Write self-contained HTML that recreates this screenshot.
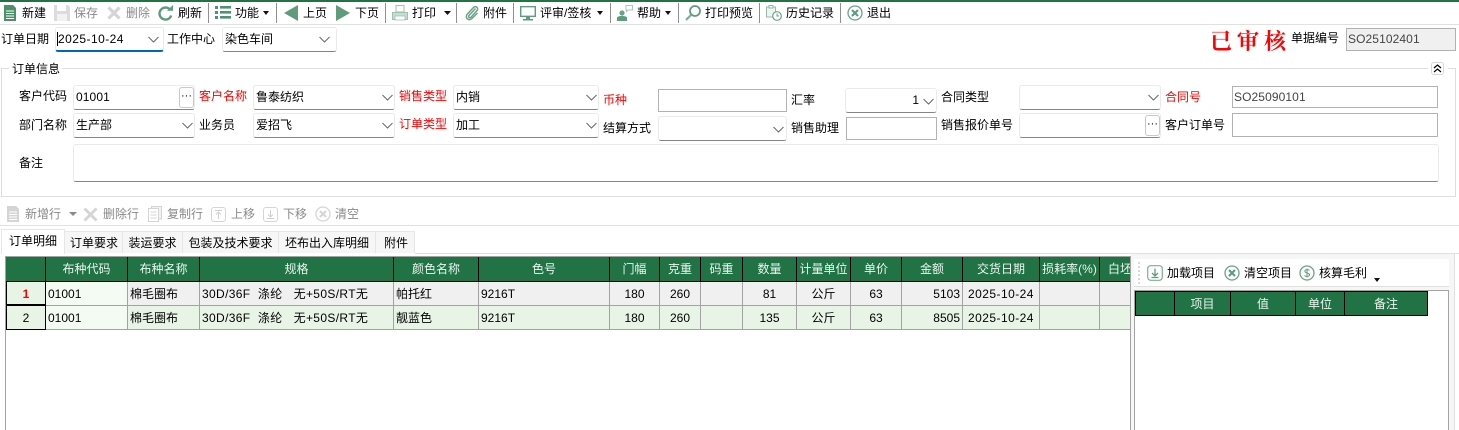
<!DOCTYPE html>
<html lang="zh"><head><meta charset="utf-8"><title>订单</title>
<style>
html,body{margin:0;padding:0;background:#fff}
#p{position:relative;width:1459px;height:430px;overflow:hidden;background:#fff;font:12px/16px "Liberation Sans","Noto Sans CJK SC",sans-serif;color:#000}
#p *{box-sizing:border-box}
.t{position:absolute;white-space:pre;line-height:16px}
.r{color:#f00}
.g{color:#8a8a8a}
.sep{position:absolute;top:3px;width:1px;height:20px;background:#8f8f8f}
.ln{position:absolute;background:#e0e0e0}
.c{position:absolute;background:#fff;border:1px solid #eaeaea;border-bottom:1.5px solid #858585;border-radius:3px;height:25px;padding:3px 2px;line-height:16px}
.c svg.ch{position:absolute;right:3px;top:8px}
.i{position:absolute;background:#fff;border:1px solid #b2b2b2;padding:2px 1px;line-height:16px;color:#444}
.b{position:absolute;width:15px;height:21px;border:1px solid #c9c9c9;border-radius:3px;background:#fff;text-align:center;line-height:16px;font-size:11px}
svg{position:absolute;display:block}
.row{position:absolute;left:0;display:flex;height:24px}
.row div{flex:none;border-right:1px solid #a3a3a3;border-bottom:1px solid #a3a3a3;text-align:center;line-height:24px;white-space:pre;overflow:hidden}
.h div{background:#217346;color:#e9f6ee;border-right:1px solid #000;border-bottom:1px solid #000;line-height:24px}
.row div.l{text-align:left;padding-left:2px}
.row div.s{letter-spacing:.35px}
.row div.rt{text-align:right;padding-right:2px}
.row div.d{letter-spacing:.45px}
.row div.n{background:#e8f5e6;border:1px solid #000;border-top:0;text-align:center}
.tab{position:absolute;top:231px;height:22px;background:#f6f6f6;border:1px solid #e6e6e6;border-bottom:0;text-align:center;line-height:23px}
</style></head><body><div id="p">

<div style="position:absolute;left:0;top:0;width:1459px;height:2px;background:#217346"></div>
<div class="ln" style="left:0;top:24px;width:1459px;height:1px"></div>

<svg style="left:4px;top:5px" width="12" height="16" viewBox="0 0 12 16"><path d="M0 0H9L12 3V16H0Z" fill="#4a9068"/><path d="M2 6H10M2 8.5H10M2 11H10M2 13.5H10" stroke="#fff" stroke-width="1"/></svg>
<span class="t" style="left:22px;top:5px">新建</span>
<svg style="left:54px;top:5px" width="16" height="16" viewBox="0 0 16 16"><path d="M0 0H14L16 2V16H0Z" fill="#dcdcdc"/><path d="M3 0H12V6H3Z" fill="#fff"/><path d="M3 9H13V16H3Z" fill="#f2f2f2"/></svg>
<span class="t g" style="left:74px;top:5px">保存</span>
<svg style="left:107px;top:6px" width="14" height="14" viewBox="0 0 14 14"><path d="M1.5 1.5L12.5 12.5M12.5 1.5L1.5 12.5" stroke="#d5d5d5" stroke-width="3.2"/></svg>
<span class="t g" style="left:126px;top:5px">删除</span>
<svg style="left:158px;top:5px" width="15" height="16" viewBox="0 0 15 16"><path d="M12.5 5.2A6 6 0 1 0 13.2 10.5" fill="none" stroke="#5f9c7c" stroke-width="2.4"/><path d="M9 5.8H15V0Z" fill="#5f9c7c"/></svg>
<span class="t" style="left:178px;top:5px">刷新</span>
<div class="sep" style="left:208px"></div>
<svg style="left:215px;top:6px" width="16" height="13" viewBox="0 0 16 13"><path d="M0 0H3V3H0ZM0 5H3V8H0ZM0 10H3V13H0Z" fill="#4f9270"/><path d="M5 0H16V2.6H5ZM5 5H16V7.6H5ZM5 10H16V12.6H5Z" fill="#4f9270"/></svg>
<span class="t" style="left:235px;top:5px">功能</span>
<svg style="left:263px;top:11px" width="6" height="4" viewBox="0 0 6 4"><path d="M0 0H6L3 4Z" fill="#111"/></svg>
<div class="sep" style="left:276px"></div>
<svg style="left:284px;top:5px" width="14" height="16" viewBox="0 0 14 16"><path d="M14 0V16L0 8Z" fill="#5f9c7c"/></svg>
<span class="t" style="left:303px;top:5px">上页</span>
<svg style="left:336px;top:5px" width="14" height="16" viewBox="0 0 14 16"><path d="M0 0V16L14 8Z" fill="#5f9c7c"/></svg>
<span class="t" style="left:355px;top:5px">下页</span>
<div class="sep" style="left:385px"></div>
<svg style="left:392px;top:5px" width="16" height="16" viewBox="0 0 16 16"><path d="M4 .5H12V7H4Z" fill="#fff" stroke="#9cc1ad"/><path d="M.5 7.5H15.5V14.5H.5Z" fill="#c6dccf" stroke="#9cc1ad"/><path d="M3 11H13V15H3Z" fill="#fff" stroke="#9cc1ad" stroke-width=".8"/></svg>
<span class="t" style="left:412px;top:5px">打印</span>
<svg style="left:444px;top:11px" width="7" height="4" viewBox="0 0 7 4"><path d="M0 0H7L3.5 4Z" fill="#111"/></svg>
<div class="sep" style="left:456px"></div>
<svg style="left:465px;top:5px" width="14" height="16" viewBox="0 0 14 16"><path d="M10.5 3.5L4 10.5C2.800 12 4.500 13.500 6 12.200L12 5.500C14 3 10.800 .2 8.500 2.500L2.200 9.200C-.5 12.500 3.500 16.800 7 13.500L12.500 8" fill="none" stroke="#6aa385" stroke-width="1.500"/></svg>
<span class="t" style="left:483px;top:5px">附件</span>
<div class="sep" style="left:513px"></div>
<svg style="left:520px;top:6px" width="16" height="15" viewBox="0 0 16 15"><path d="M.7 .7H15.300V10.300H.7Z" fill="#fff" stroke="#5f9c7c" stroke-width="1.400"/><path d="M6 11H10V13H13V14.500H3V13H6Z" fill="#5f9c7c"/></svg>
<span class="t" style="left:540px;top:5px">评审/签核</span>
<svg style="left:597px;top:11px" width="6" height="4" viewBox="0 0 6 4"><path d="M0 0H6L3 4Z" fill="#111"/></svg>
<div class="sep" style="left:610px"></div>
<svg style="left:617px;top:5px" width="16" height="16" viewBox="0 0 16 16"><circle cx="5" cy="8" r="2.600" fill="#6aa385"/><path d="M0 16V13C0 11.500 2 11 5 11S10 11.500 10 13V16Z" fill="#5f9c7c"/><path d="M9 .5H15.500V5H11L9.500 6.500V5H9Z" fill="#fff" stroke="#a9c9b7"/></svg>
<span class="t" style="left:637px;top:5px">帮助</span>
<svg style="left:665px;top:11px" width="6" height="4" viewBox="0 0 6 4"><path d="M0 0H6L3 4Z" fill="#111"/></svg>
<div class="sep" style="left:678px"></div>
<svg style="left:685px;top:5px" width="16" height="16" viewBox="0 0 16 16"><circle cx="10" cy="6" r="5" fill="none" stroke="#5f9c7c" stroke-width="1.800"/><path d="M6 10L1 15" stroke="#7cae93" stroke-width="2.200"/></svg>
<span class="t" style="left:705px;top:5px">打印预览</span>
<div class="sep" style="left:759px"></div>
<svg style="left:766px;top:5px" width="16" height="16" viewBox="0 0 16 16"><path d="M.5 2H9.500V12H.5Z" fill="#eef5f0" stroke="#93bba5"/><path d="M3 .5H7V3H3Z" fill="#fff" stroke="#93bba5"/><circle cx="11" cy="11" r="4.300" fill="#fff" stroke="#6aa385" stroke-width="1.200"/><path d="M11 8.500V11H13" fill="none" stroke="#6aa385"/></svg>
<span class="t" style="left:786px;top:5px">历史记录</span>
<div class="sep" style="left:840px"></div>
<svg style="left:847px;top:5px" width="16" height="16" viewBox="0 0 16 16"><circle cx="8" cy="8" r="7" fill="none" stroke="#6aa385" stroke-width="1.300"/><path d="M5 5L11 11M11 5L5 11" stroke="#5f9c7c" stroke-width="2.200"/></svg>
<span class="t" style="left:867px;top:5px">退出</span>

<span class="t" style="left:1px;top:31px">订单日期</span>
<div class="c" style="left:55px;top:27px;width:109px;border-color:#eaeaea;border-bottom:2px solid #0067c0;letter-spacing:.45px"><span style="border-left:1px solid #000;margin-left:-1px">2025-10-24</span><svg class="ch" style="right:4px" width="11" height="7" viewBox="0 0 11 7"><path d="M.5 1L5.500 6L10.500 1" fill="none" stroke="#666"/></svg></div>
<span class="t" style="left:167px;top:31px">工作中心</span>
<div class="c" style="left:222px;top:27px;width:115px">染色车间<svg class="ch" style="right:6px" width="11" height="7" viewBox="0 0 11 7"><path d="M.5 1L5.500 6L10.500 1" fill="none" stroke="#666"/></svg></div>
<span class="t r" style="left:1210px;top:26px;font:700 22px/30px 'Noto Serif CJK SC',serif;letter-spacing:5px">已审核</span>
<span class="t" style="left:1291px;top:30px">单据编号</span>
<div class="i" style="left:1346px;top:28px;width:110px;height:23px;background:#f0f0f0;letter-spacing:.1px">SO25102401</div>

<div style="position:absolute;left:1px;top:68px;width:1455px;height:129px;border:1px solid #dedede"></div>
<div style="position:absolute;left:9px;top:62px;width:53px;height:14px;background:#fff"></div>
<span class="t" style="left:12px;top:61px">订单信息</span>
<div style="position:absolute;left:1428px;top:60px;width:20px;height:16px;background:#fff"></div>
<div style="position:absolute;left:1431px;top:62px;width:13px;height:13px;border:1px solid #d8d8d8;border-radius:3px"></div>
<svg style="left:1433px;top:64px" width="9" height="9" viewBox="0 0 9 9"><path d="M1 4L4.500 1L8 4M1 8L4.500 5L8 8" fill="none" stroke="#000" stroke-width="1.200"/></svg>

<span class="t" style="left:19px;top:88px">客户代码</span>
<div class="c" style="left:73px;top:85px;width:122px;letter-spacing:.1px">01001</div>
<div class="b" style="left:179px;top:87px">···</div>
<span class="t r" style="left:199px;top:88px">客户名称</span>
<div class="c" style="left:253px;top:85px;width:142px">鲁泰纺织<svg class="ch" style="right:1px" width="11" height="7" viewBox="0 0 11 7"><path d="M.5 1L5.500 6L10.500 1" fill="none" stroke="#666"/></svg></div>
<span class="t r" style="left:399px;top:88px">销售类型</span>
<div class="c" style="left:453px;top:85px;width:146px">内销<svg class="ch" style="right:1px" width="11" height="7" viewBox="0 0 11 7"><path d="M.5 1L5.500 6L10.500 1" fill="none" stroke="#666"/></svg></div>
<span class="t r" style="left:603px;top:92px">币种</span>
<div class="i" style="left:658px;top:89px;width:129px;height:23px"></div>
<span class="t" style="left:791px;top:92px">汇率</span>
<div class="c" style="left:845px;top:88px;width:92px;text-align:right;padding-right:17px">1<svg class="ch" style="right:2px;top:9px" width="11" height="7" viewBox="0 0 11 7"><path d="M.5 1L5.500 6L10.500 1" fill="none" stroke="#666"/></svg></div>
<span class="t" style="left:941px;top:89px">合同类型</span>
<div class="c" style="left:1019px;top:85px;width:142px"><svg class="ch" style="right:1px" width="11" height="7" viewBox="0 0 11 7"><path d="M.5 1L5.500 6L10.500 1" fill="none" stroke="#666"/></svg></div>
<span class="t r" style="left:1165px;top:89px">合同号</span>
<div class="i" style="left:1232px;top:86px;width:206px;height:22px;padding-top:2px;letter-spacing:.1px">SO25090101</div>

<span class="t" style="left:19px;top:117px">部门名称</span>
<div class="c" style="left:73px;top:113px;width:122px">生产部<svg class="ch" style="right:1px" width="11" height="7" viewBox="0 0 11 7"><path d="M.5 1L5.500 6L10.500 1" fill="none" stroke="#666"/></svg></div>
<span class="t" style="left:199px;top:117px">业务员</span>
<div class="c" style="left:253px;top:113px;width:142px">爱招飞<svg class="ch" style="right:1px" width="11" height="7" viewBox="0 0 11 7"><path d="M.5 1L5.500 6L10.500 1" fill="none" stroke="#666"/></svg></div>
<span class="t r" style="left:399px;top:116px">订单类型</span>
<div class="c" style="left:453px;top:113px;width:146px">加工<svg class="ch" style="right:1px" width="11" height="7" viewBox="0 0 11 7"><path d="M.5 1L5.500 6L10.500 1" fill="none" stroke="#666"/></svg></div>
<span class="t" style="left:603px;top:120px">结算方式</span>
<div class="c" style="left:658px;top:116px;width:129px"><svg class="ch" style="right:2px;top:9px" width="11" height="7" viewBox="0 0 11 7"><path d="M.5 1L5.500 6L10.500 1" fill="none" stroke="#666"/></svg></div>
<span class="t" style="left:791px;top:120px">销售助理</span>
<div class="i" style="left:846px;top:117px;width:91px;height:23px"></div>
<span class="t" style="left:941px;top:117px">销售报价单号</span>
<div class="c" style="left:1019px;top:113px;width:142px"></div>
<div class="b" style="left:1145px;top:115px">···</div>
<span class="t" style="left:1165px;top:117px">客户订单号</span>
<div class="i" style="left:1232px;top:113px;width:206px;height:24px"></div>

<span class="t" style="left:19px;top:155px">备注</span>
<div class="c" style="left:73px;top:144px;width:1366px;height:38px"></div>

<div class="ln" style="left:0;top:225px;width:1459px;height:1px"></div>

<svg style="left:7px;top:206px" width="12" height="16" viewBox="0 0 12 16"><path d="M0 0H9L12 3V16H0Z" fill="#d4d4d4"/><path d="M2 6H10M2 8.500H10M2 11H10M2 13.500H10" stroke="#fff"/></svg>
<span class="t g" style="left:25px;top:206px">新增行</span>
<svg style="left:69px;top:212px" width="8" height="4" viewBox="0 0 8 4"><path d="M0 0H8L4 4Z" fill="#8a8a8a"/></svg>
<svg style="left:83px;top:207px" width="15" height="15" viewBox="0 0 15 15"><path d="M1.500 1.500L13.500 13.500M13.500 1.500L1.500 13.500" stroke="#d5d5d5" stroke-width="3"/></svg>
<span class="t g" style="left:103px;top:206px">删除行</span>
<svg style="left:148px;top:206px" width="14" height="16" viewBox="0 0 14 16"><path d="M3.500 .5H13.500V13H3.500Z" fill="#f2f2f2" stroke="#d5d5d5"/><path d="M.5 2.500H10.500V15.500H.5Z" fill="#fff" stroke="#d5d5d5"/><path d="M2.500 6H8.500M2.500 9H8.500M2.500 12H8.500" stroke="#d5d5d5"/></svg>
<span class="t g" style="left:167px;top:206px">复制行</span>
<svg style="left:211px;top:207px" width="15" height="15" viewBox="0 0 15 15"><rect x=".5" y=".5" width="14" height="14" rx="2.500" fill="none" stroke="#d5d5d5"/><path d="M4 3.500H11M7.500 12V5M5 7.500L7.500 5L10 7.500" fill="none" stroke="#cfcfcf"/></svg>
<span class="t g" style="left:231px;top:206px">上移</span>
<svg style="left:263px;top:207px" width="15" height="15" viewBox="0 0 15 15"><rect x=".5" y=".5" width="14" height="14" rx="2.500" fill="none" stroke="#d5d5d5"/><path d="M4 11.500H11M7.500 3V10M5 7.500L7.500 10L10 7.500" fill="none" stroke="#cfcfcf"/></svg>
<span class="t g" style="left:283px;top:206px">下移</span>
<svg style="left:315px;top:206px" width="16" height="16" viewBox="0 0 16 16"><circle cx="8" cy="8" r="7" fill="none" stroke="#d5d5d5" stroke-width="1.300"/><path d="M5 5L11 11M11 5L5 11" stroke="#d5d5d5" stroke-width="2"/></svg>
<span class="t g" style="left:335px;top:206px">清空</span>

<div class="ln" style="left:415px;top:253px;width:1044px;height:1px"></div>
<div class="tab" style="left:64px;width:59px;padding-left:1px">订单要求</div>
<div class="tab" style="left:122px;width:61px">装运要求</div>
<div class="tab" style="left:182px;width:97px">包装及技术要求</div>
<div class="tab" style="left:278px;width:98px">坯布出入库明细</div>
<div class="tab" style="left:375px;width:40px;padding-left:2px">附件</div>
<div class="tab" style="left:1px;top:229px;width:64px;height:25px;background:#fff;line-height:22px;z-index:2;border-bottom:0">订单明细</div>

<div style="position:absolute;left:5px;top:256px;width:1126px;height:180px;border:1px solid #a3a3a3;overflow:hidden;background:#fff;z-index:1">
<div class="row h" style="top:0;height:25px">
<div style="width:40px"></div><div style="width:82px">布种代码</div><div style="width:72px">布种名称</div><div style="width:194px">规格</div><div style="width:85px">颜色名称</div><div style="width:131px">色号</div><div style="width:50px">门幅</div><div style="width:41px">克重</div><div style="width:42px">码重</div><div style="width:54px">数量</div><div style="width:54px">计量单位</div><div style="width:51px">单价</div><div style="width:61px">金额</div><div style="width:77px">交货日期</div><div style="width:60px">损耗率(%)</div><div style="width:40px;border-right:0">白坯</div>
</div>
<div class="row" style="top:25px;background:#f0f0f0">
<div class="n" style="width:40px;color:#f00;font-weight:700;border-bottom:2px solid #000">1</div><div class="l" style="width:82px;background:#f4fbf2">01001</div><div class="l" style="width:72px">棉毛圈布</div><div class="l s" style="width:194px">30D/36F  涤纶   无+50S/RT无</div><div class="l" style="width:85px">帕托红</div><div class="l" style="width:131px">9216T</div><div style="width:50px">180</div><div style="width:41px">260</div><div style="width:42px"></div><div style="width:54px">81</div><div style="width:54px">公斤</div><div style="width:51px">63</div><div class="rt" style="width:61px">5103</div><div class="d" style="width:77px">2025-10-24</div><div style="width:60px"></div><div style="width:60px"></div>
</div>
<div class="row" style="top:49px;background:#e8f5e6">
<div class="n" style="width:40px;border-bottom:1px solid #000">2</div><div class="l" style="width:82px;background:#f4fbf2">01001</div><div class="l" style="width:72px">棉毛圈布</div><div class="l s" style="width:194px">30D/36F  涤纶   无+50S/RT无</div><div class="l" style="width:85px">靓蓝色</div><div class="l" style="width:131px">9216T</div><div style="width:50px">180</div><div style="width:41px">260</div><div style="width:42px"></div><div style="width:54px">135</div><div style="width:54px">公斤</div><div style="width:51px">63</div><div class="rt" style="width:61px">8505</div><div class="d" style="width:77px">2025-10-24</div><div style="width:60px"></div><div style="width:60px"></div>
</div>
</div>

<div style="position:absolute;left:1131px;top:254px;width:324px;height:176px;background:#f6f6f6;border-right:1px solid #e0e0e0"></div>
<div style="position:absolute;left:1134px;top:259px;width:315px;height:27px;background:#fff"></div>
<div class="ln" style="left:1134px;top:286px;width:315px;height:1px"></div>
<svg style="left:1138px;top:262px" width="2" height="22" viewBox="0 0 2 22"><path d="M1 0V22" stroke="#ccc" stroke-width="1.500" stroke-dasharray="2 2"/></svg>
<svg style="left:1147px;top:265px" width="16" height="16" viewBox="0 0 16 16"><rect x=".7" y=".7" width="14.600" height="14.600" rx="3" fill="none" stroke="#7cae93" stroke-width="1.200"/><path d="M8 3.500V10M5 8L8 11L11 8M4.500 12.500H11.500" fill="none" stroke="#5f9c7c" stroke-width="1.300"/></svg>
<span class="t" style="left:1167px;top:265px">加载项目</span>
<svg style="left:1224px;top:265px" width="16" height="16" viewBox="0 0 16 16"><circle cx="8" cy="8" r="7" fill="none" stroke="#6aa385" stroke-width="1.300"/><path d="M5 5L11 11M11 5L5 11" stroke="#5f9c7c" stroke-width="2.200"/></svg>
<span class="t" style="left:1244px;top:265px">清空项目</span>
<svg style="left:1299px;top:265px" width="16" height="16" viewBox="0 0 16 16"><circle cx="8" cy="8" r="7" fill="none" stroke="#6aa385" stroke-width="1.300"/><path d="M10.500 5.500C9.500 4.300 5.800 4.200 5.800 6.200C5.800 8.300 10.600 7.700 10.600 9.900C10.600 11.800 6.700 11.800 5.500 10.500M8 3.500V12.500" fill="none" stroke="#5f9c7c"/></svg>
<span class="t" style="left:1319px;top:265px">核算毛利</span>
<svg style="left:1374px;top:278px" width="6" height="4" viewBox="0 0 6 4"><path d="M0 0H6L3 4Z" fill="#111"/></svg>

<div style="position:absolute;left:1134px;top:290px;width:315px;height:150px;border:1px solid #a3a3a3;background:#fff"></div>
<div class="row h" style="left:1135px;top:291px;height:25px">
<div style="width:40px;border-left:1px solid #000;border-top:1px solid #000"></div><div style="width:56px;border-top:1px solid #000">项目</div><div style="width:65px;border-top:1px solid #000">值</div><div style="width:49px;border-top:1px solid #000">单位</div><div style="width:83px;border-top:1px solid #000">备注</div>
</div>

</div></body></html>
